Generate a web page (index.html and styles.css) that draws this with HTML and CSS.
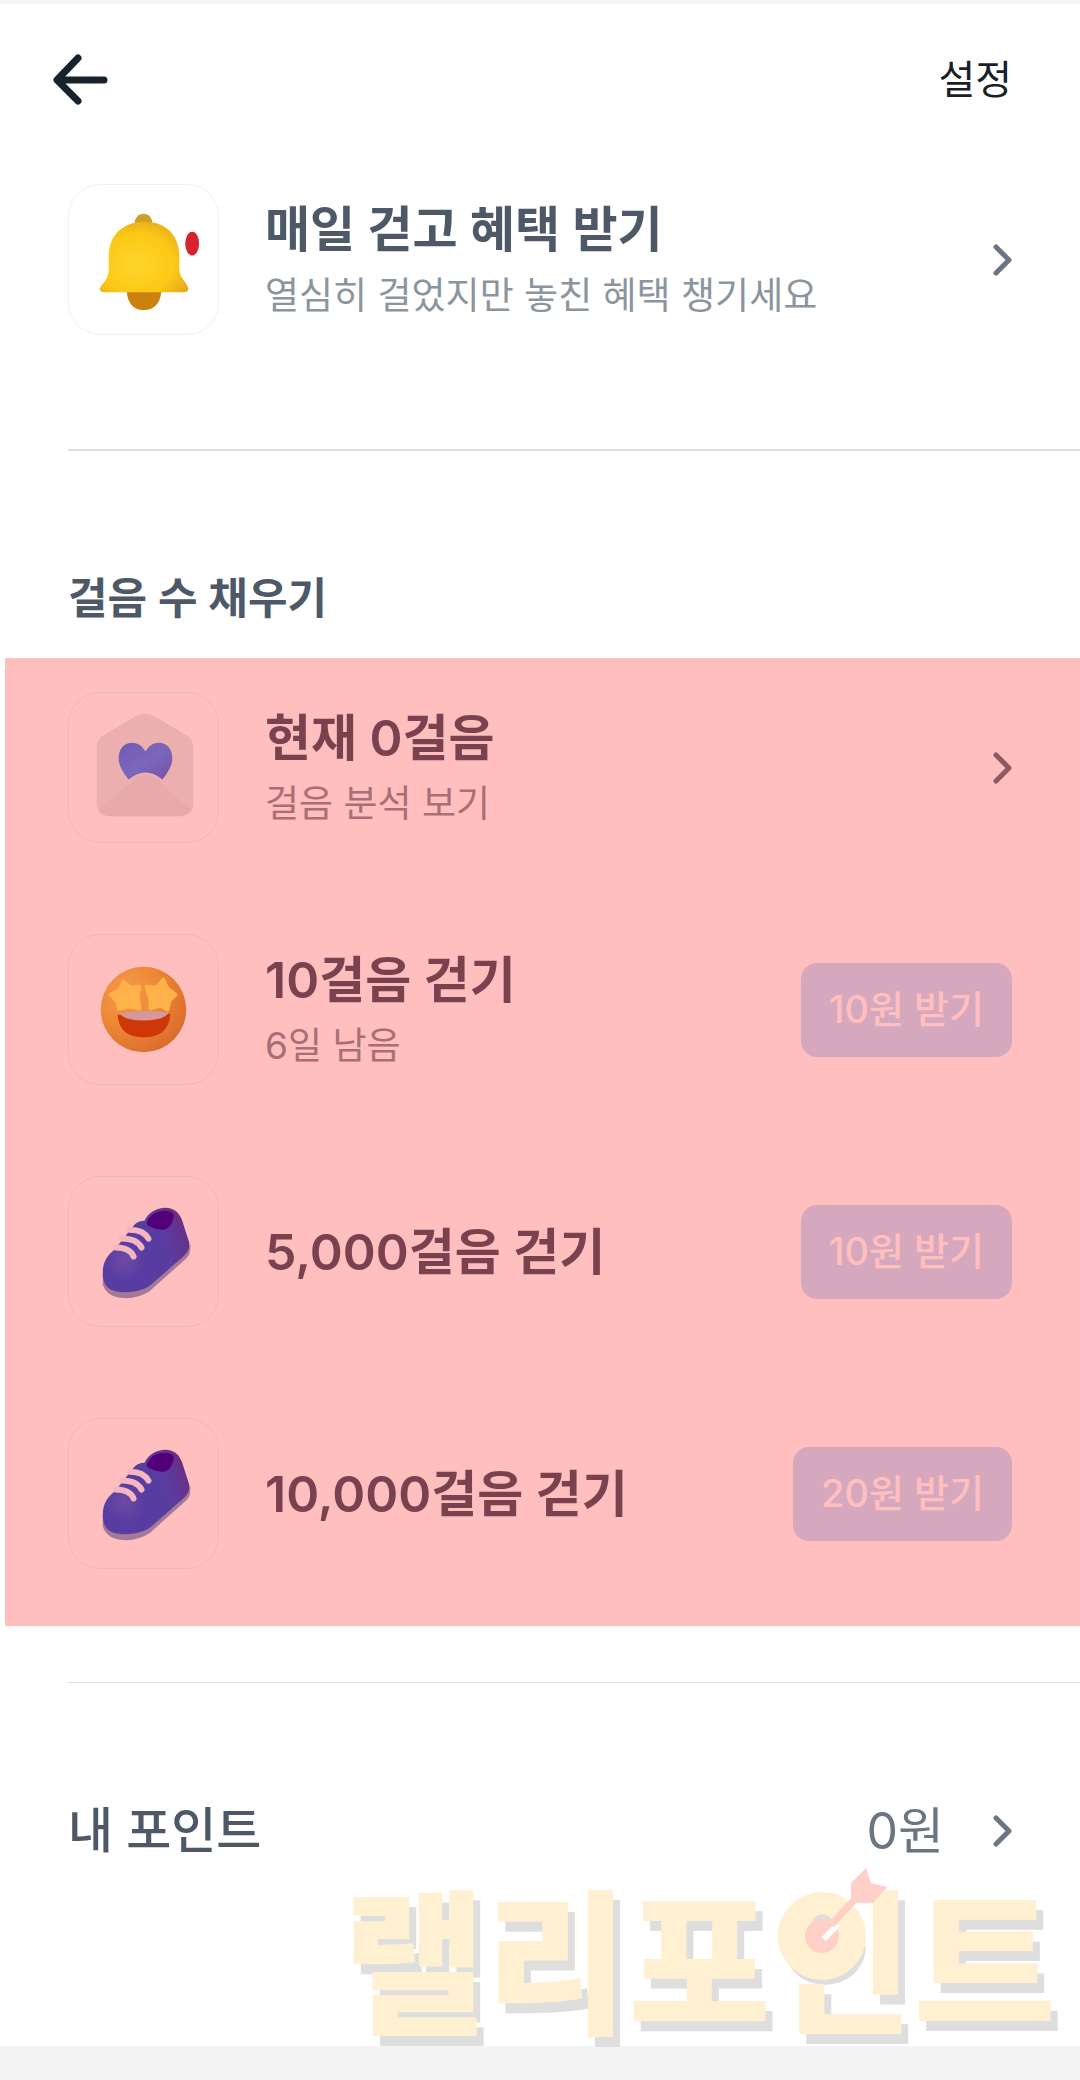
FILE: index.html
```html
<!DOCTYPE html>
<html lang="ko">
<head>
<meta charset="utf-8">
<meta name="viewport" content="width=device-width, initial-scale=1">
<title>걸음 수 채우기</title>
<link rel="stylesheet" href="styles.css">
</head>
<body>
<svg class="defs" aria-hidden="true">
  <defs>
    <radialGradient id="bellBody" cx=".42" cy=".6" r=".7">
      <stop offset="0" stop-color="#ffd52c"/><stop offset=".6" stop-color="#fbc916"/><stop offset="1" stop-color="#e3a51c"/>
    </radialGradient>
    <radialGradient id="face" cx=".3" cy=".3" r=".8">
      <stop offset="0" stop-color="#f3cf62"/><stop offset=".5" stop-color="#e6b548"/><stop offset="1" stop-color="#cf8d3a"/>
    </radialGradient>
    <radialGradient id="shoeBody" cx=".25" cy=".62" r=".85">
      <stop offset="0" stop-color="#3d64dc"/><stop offset=".3" stop-color="#1f50d8"/><stop offset=".65" stop-color="#2450d4"/><stop offset="1" stop-color="#3a3cae"/>
    </radialGradient>
    <linearGradient id="heart" x1="0" y1="0" x2="1" y2="1">
      <stop offset="0" stop-color="#4278ee"/><stop offset=".5" stop-color="#4d8bfb"/><stop offset="1" stop-color="#4a6ee0"/>
    </linearGradient>
    <symbol id="shoe" viewBox="0 0 150 150">
      <path d="M34 98V108Q38 122 58 122Q70 122 81 115L118 82Q123 77 122 68Z" fill="#84a0cc"/>
      <path d="M34 97C34 86 38 79 46 73L65 49Q69 44 76 44C80 36 88 31 97 31C106 31 111 36 114 44L121 66Q122 74 115 80L82 109C72 116 58 117 47 115C38 113 34 107 34 97Z" fill="url(#shoeBody)"/>
      <path d="M78 47C80 38 88 34 97 34C104 34 107 38 105 42C103 50 98 54 92 53C87 52 81 51 78 47Z" fill="#1800a0"/>
      <path d="M61 53Q75 53 80 62M53 62Q68 62 73 71M47 71Q61 71 65 80" fill="none" stroke="#f2f4ff" stroke-width="6" stroke-linecap="round"/>
    </symbol>
    <symbol id="chevron" viewBox="0 0 24 36">
      <path d="M8 5L21 18L8 31" fill="none" stroke="currentColor" stroke-width="5" stroke-linecap="round" stroke-linejoin="round"/>
    </symbol>
  </defs>
</svg>

<div class="page">
  <header class="topbar">
    <button class="back" type="button" aria-label="뒤로">
      <svg width="60" height="60" viewBox="0 0 60 60"><path d="M54 30H8M28 8L7 30L28 51" fill="none" stroke="#19212b" stroke-width="7" stroke-linecap="round" stroke-linejoin="round"/></svg>
    </button>
    <a class="settings" href="#">설정</a>
  </header>

  <main>
    <a class="row benefit" href="#">
      <span class="tile">
        <svg viewBox="0 0 150 150">
          <path d="M58 107H93Q91 126 75 126Q60 126 58 107Z" fill="#cb810f"/>
          <path d="M66 40Q66 29 75 29Q84 29 84 40Z" fill="#cda02c"/>
          <path d="M40 72C40 50 55 37 76 37C97 37 111 50 111 72V84C111 95 120 98 120 105Q120 108 115 108H36Q30 108 31 104C34 98 40 95 40 84Z" fill="url(#bellBody)"/>
          <ellipse cx="124" cy="59" rx="7" ry="12" fill="#d5242b"/>
        </svg>
      </span>
      <span class="texts"><strong class="title">매일 걷고 혜택 받기</strong><span class="sub">열심히 걸었지만 놓친 혜택 챙기세요</span></span>
      <svg class="chevron"><use href="#chevron"/></svg>
    </a>

    <hr class="divider thick">

    <h2 class="heading">걸음 수 채우기</h2>
    <section class="steps">
      <a class="row" href="#">
        <span class="tile">
          <svg viewBox="0 0 150 150">
            <path d="M28 54Q28 47 34 43L66 24Q77 18 87 24L119 43Q125 47 125 54V111Q125 124 112 124H41Q28 124 28 111Z" fill="#e5eaeb"/>
            <path d="M31 117L65 87Q77 78 88 87L122 117Q118 124 111 124H42Q34 124 31 117Z" fill="#e0e2e3"/>
            <path d="M77 59C71 46 50 46 50 66Q50 75 60 87Q77 73 94 87Q104 75 104 66C104 46 83 46 77 59Z" fill="url(#heart)"/>
          </svg>
        </span>
        <span class="texts"><strong class="title count">현재 0걸음</strong><span class="sub">걸음 분석 보기</span></span>
        <svg class="chevron"><use href="#chevron"/></svg>
      </a>
      <div class="row">
        <span class="tile">
          <svg viewBox="0 0 150 150">
            <circle cx="75" cy="75" r="43" fill="url(#face)"/>
            <path d="M55 47L61 53L71 52L69 62L71 74L62 72L50 74L49 67L42 60L51 56ZM95 45L99 54L107 60L101 66L99 75L92 71L82 74L82 64L78 52L88 53Z" fill="#ffee62" stroke="#ffee62" stroke-width="4" stroke-linejoin="round"/>
            <path d="M49 80Q75 84 102 79Q101 103 75 103Q50 103 49 80Z" fill="#c04a08"/>
            <path d="M51 79Q75 74 101 78Q95 86 75 86Q56 86 51 79Z" fill="#c8cad2"/>
          </svg>
        </span>
        <span class="texts"><strong class="title count">10걸음 걷기</strong><span class="sub">6일 남음</span></span>
        <button class="claim" type="button">10원 받기</button>
      </div>
      <div class="row">
        <span class="tile"><svg><use href="#shoe"/></svg></span>
        <span class="texts"><strong class="title count">5,000걸음 걷기</strong></span>
        <button class="claim" type="button">10원 받기</button>
      </div>
      <div class="row">
        <span class="tile"><svg><use href="#shoe"/></svg></span>
        <span class="texts"><strong class="title count">10,000걸음 걷기</strong></span>
        <button class="claim" type="button">20원 받기</button>
      </div>
    </section>

    <hr class="divider">

    <section class="points">
      <a class="points-row" href="#">
        <span class="points-label">내 포인트</span>
        <span class="points-value">0원</span>
        <svg class="chevron"><use href="#chevron"/></svg>
      </a>
      <div class="watermark">랠리포인트
        <svg class="target" viewBox="0 0 120 140">
          <circle cx="50" cy="82" r="30" fill="#fff" stroke="#fff0d2" stroke-width="28"/>
          <path d="M40 66Q50 54 60 66L50 70Z" fill="#dedede"/>
          <circle cx="50" cy="82" r="17" fill="#ffd0c8"/>
          <path d="M52 85L66 70" stroke="#fff" stroke-width="6"/>
          <path d="M59 71L84 44" stroke="#ffd0c8" stroke-width="7"/>
          <path d="M94 14L99 29L115 33L101 49L86 49L79 43V29Z" fill="#ffd0c8"/>
        </svg>
      </div>
    </section>
  </main>
  <div class="bottom"></div>
</div>
</body>
</html>
```
FILE: styles.css
```css
* { box-sizing: border-box; }

body {
  margin: 0;
  background: #fff;
  color: #4e5968;
  font-family: Inter, "Noto Sans CJK KR", sans-serif;
}

a { color: inherit; text-decoration: none; }

button { border: 0; padding: 0; font: inherit; }

.defs { position: absolute; width: 0; height: 0; }

.page {
  display: flex;
  flex-direction: column;
  min-height: 100vh;
  border-top: 4px solid #f4f4f4;
}

.topbar {
  display: flex;
  align-items: center;
  justify-content: space-between;
  height: 152px;
  padding: 0 68px 0 50px;
}

.back { height: 60px; background: none; }
.back svg { display: block; }

.settings {
  color: #191f28;
  font-size: 40px;
  line-height: 60px;
}

.row {
  display: flex;
  align-items: center;
  gap: 46px;
  padding: 0 68px;
}

.benefit { margin-top: 28px; }

.tile {
  flex: none;
  width: 151px;
  height: 151px;
  border: 1px solid #f0f1f2;
  border-radius: 32px;
}

.tile svg { display: block; width: 100%; height: 100%; }

.texts { flex: 1; display: flex; flex-direction: column; }

.title {
  font-size: 49px;
  font-weight: 600;
  line-height: 72px;
}

.title.count { font-size: 50px; }

.sub {
  color: #8b959e;
  font-size: 37px;
  line-height: 60px;
}

.chevron {
  flex: none;
  width: 24px;
  height: 36px;
  color: #6b7684;
}

.divider {
  height: 1px;
  margin: 56px 0 0 68px;
  border: 0;
  background: #dcdee0;
}

.divider.thick { height: 2px; margin-top: 114px; }

.heading {
  margin: 117px 68px 30px;
  font-size: 43px;
  font-weight: 600;
  line-height: 60px;
}

.steps {
  position: relative;
  display: flex;
  flex-direction: column;
  gap: 91px;
  padding: 34px 0 57px;
}

/* red highlight laid over the whole list */
.steps::after {
  content: "";
  position: absolute;
  inset: 0 0 0 5px;
  background: rgba(255, 0, 0, 0.25);
  pointer-events: none;
}

.claim {
  height: 94px;
  padding: 0 28px 6px;
  border-radius: 16px;
  background: #c9e0fd;
  color: #fff;
  font-size: 38px;
  font-weight: 500;
}

.points {
  position: relative;
  padding: 118px 68px 185px;
}

.points-row {
  display: flex;
  align-items: center;
  gap: 44px;
  font-size: 50px;
  line-height: 60px;
}

.points-label { flex: 1; font-size: 49px; font-weight: 500; }
.points-value { color: #6b7684; }

.watermark {
  position: absolute;
  right: 24px;
  bottom: 12px;
  color: #fff0d2;
  font-family: "Noto Sans CJK KR", sans-serif;
  font-size: 155px;
  font-weight: 900;
  line-height: 160px;
  text-shadow: 7px 10px 0 #dedede;
  white-space: nowrap;
  pointer-events: none;
}

.target {
  position: absolute;
  right: 164px;
  bottom: 40px;
  width: 120px;
  height: 140px;
}

.bottom { flex: 1; min-height: 34px; background: #f4f4f4; }
```
